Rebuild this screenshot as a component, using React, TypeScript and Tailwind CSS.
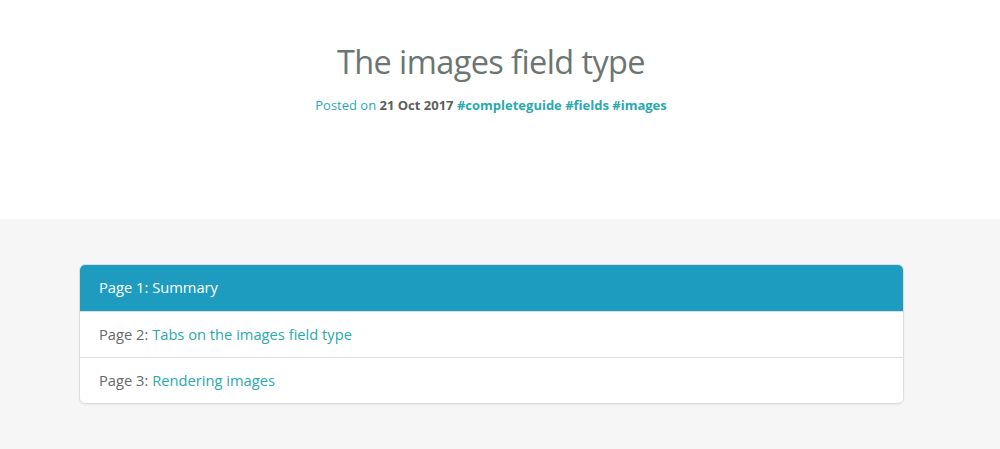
import React from "react";

const pages = [
    { label: "Page 1:", title: "Summary", active: true },
    { label: "Page 2:", title: "Tabs on the images field type", active: false },
    { label: "Page 3:", title: "Rendering images", active: false },
];

export default function App() {
    return (
        <div className="min-h-screen bg-[#f6f6f6] font-['Open_Sans',sans-serif]">
            <header className="bg-white h-[219px] pr-[18px] pt-[40px] text-center">
                <h1 className="text-[32.5px] leading-[44px] text-[#6c7670] tracking-[-0.6px]">The images field type</h1>
                <p className="mt-[12px] text-[13px] text-[#2aa9ae]">
                    Posted on <span className="font-bold text-[#5b5f5d]">21 Oct 2017</span>{" "}
                    <span className="font-bold">#completeguide #fields #images</span>
                </p>
            </header>
            <main className="pt-[45px] pl-[79px] pr-[96px]">
                <div className="rounded-[6px] border border-[#dddddd] bg-white overflow-hidden shadow-[0_1px_2px_rgba(0,0,0,0.06)]">
                    {pages.map((p, i) => (
                        <div
                            key={i}
                            className={
                                p.active
                                    ? "h-[47px] -m-px mb-0 rounded-t-[6px] bg-[#1e9cc0] px-[20px] flex items-center text-[14.7px] text-white"
                                    : "h-[46px] border-t border-[#dddddd] first:border-t-0 px-[19px] flex items-center text-[14.7px] text-[#666a68]"
                            }
                        >
                            {p.label}&nbsp;
                            <span className={p.active ? "" : "text-[#2aa9ae]"}>{p.title}</span>
                        </div>
                    ))}
                </div>
            </main>
        </div>
    );
}
